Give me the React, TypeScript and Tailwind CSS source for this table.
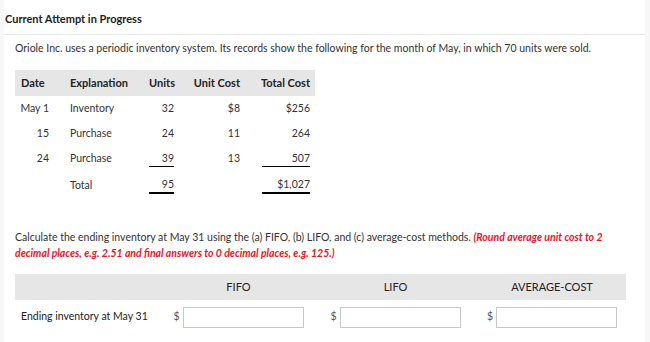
import React from "react";

type Row = {
  date: string;
  label: string;
  units: string;
  unitCost: string;
  total: string;
  underline?: boolean;
};

const rows: Row[] = [
  { date: "May 1", label: "Inventory", units: "32", unitCost: "$8", total: "$256" },
  { date: "15", label: "Purchase", units: "24", unitCost: "11", total: "264" },
  { date: "24", label: "Purchase", units: "39", unitCost: "13", total: "507", underline: true },
];

const cols = "grid grid-cols-[49px_76px_40px_65px_70px]";

function AnswerCell({ extra = "" }: { extra?: string }) {
  return (
    <div className={`flex items-center justify-center ${extra}`}>
      <span className="mr-[3px] w-[6px] text-[#555]">$</span>
      <input
        type="text"
        className="h-[21px] w-[121px] border border-[#c9c9c9] bg-white outline-none"
      />
    </div>
  );
}

export default function App() {
  return (
    <div
      className="flex h-[342px] w-[650px] bg-white text-[10.5px] text-[#333]"
      style={{ fontFamily: "Lato, 'Open Sans', sans-serif" }}
    >
      <div className="w-[4px] bg-[#f7f7f7]" />
      <div className="flex-1">
        <div className="flex h-[35px] items-center border-b border-[#e9e9e9] pl-[1px] pt-[4px] text-[11px] font-bold text-[#222]">
          Current Attempt in Progress
        </div>

        <div className="pl-[11px]">
          <p className="mt-[5px] leading-[16px]">
            Oriole Inc. uses a periodic inventory system. Its records show the following for the month of May, in which 70 units were sold.
          </p>

          {/* purchases table */}
          <div className="mt-[14px] w-[300px]">
            <div className={`${cols} h-[26px] items-center bg-[#e6e6e6] text-[11px] font-bold text-[#222]`}>
              <div className="pl-[6px]">Date</div>
              <div className="pl-[6px]">Explanation</div>
              <div className="pr-[5px] text-right">Units</div>
              <div className="pr-[5px] text-right">Unit Cost</div>
              <div className="pr-[5px] text-right">Total Cost</div>
            </div>
            {rows.map((r) => (
              <div key={r.date} className={`${cols} h-[25px] items-center`}>
                <div className="pr-[15px] text-right">{r.date}</div>
                <div className="pl-[6px]">{r.label}</div>
                <div className="flex justify-end pr-[6px]">
                  <span
                    className={`inline-block w-[25px] text-right leading-[15px] ${
                      r.underline ? "border-b border-black" : ""
                    }`}
                  >
                    {r.units}
                  </span>
                </div>
                <div className="pr-[5px] text-right">{r.unitCost}</div>
                <div className="flex justify-end pr-[5px]">
                  <span
                    className={`inline-block w-[48px] text-right leading-[15px] ${
                      r.underline ? "border-b border-black" : ""
                    }`}
                  >
                    {r.total}
                  </span>
                </div>
              </div>
            ))}
            <div className={`${cols} h-[26px] items-center pt-[3px]`}>
              <div />
              <div className="pl-[6px]">Total</div>
              <div className="flex justify-end pr-[6px]">
                <span className="inline-block w-[25px] border-b-2 border-black text-right leading-[15px]">
                  95
                </span>
              </div>
              <div />
              <div className="flex justify-end pr-[5px]">
                <span className="inline-block w-[48px] border-b-2 border-black text-right leading-[15px]">
                  $1,027
                </span>
              </div>
            </div>
          </div>

          <div className="mt-[32px] leading-[16px]">
            <p>
              Calculate the ending inventory at May 31 using the (a) FIFO, (b) LIFO, and (c) average-cost methods.{" "}
              <span className="font-bold italic text-[#e8161b]">(Round average unit cost to 2</span>
            </p>
            <p className="font-bold italic text-[#e8161b]">
              decimal places, e.g. 2.51 and final answers to 0 decimal places, e.g. 125.)
            </p>
          </div>

          {/* answer table */}
          <div className="mt-[13px] w-[611px]">
            <div className="grid h-[26px] grid-cols-[145px_157px_157px_152px] items-center bg-[#e6e6e6] text-[11px] text-[#222]">
              <div />
              <div className="text-center">FIFO</div>
              <div className="text-center">LIFO</div>
              <div className="pl-[4px] text-center">AVERAGE-COST</div>
            </div>
            <div className="grid h-[34px] grid-cols-[145px_157px_157px_152px] items-center">
              <div className="pl-[6px] text-[#222]">Ending inventory at May 31</div>
              <AnswerCell />
              <AnswerCell />
              <AnswerCell extra="pl-[4px]" />
            </div>
          </div>
        </div>
      </div>
      <div className="w-[5px] bg-[#f7f7f7]" />
    </div>
  );
}
